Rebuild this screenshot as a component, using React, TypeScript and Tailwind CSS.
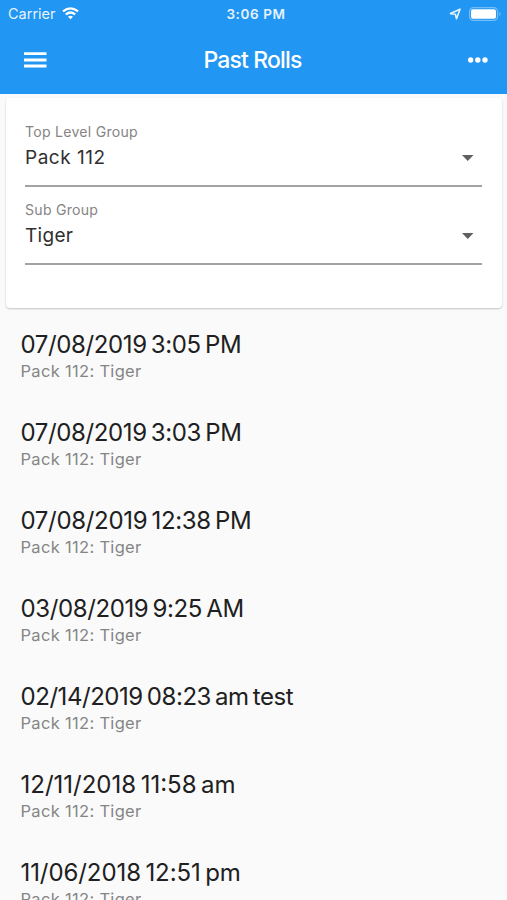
const rolls = [
  { date: "07/08/2019 3:05 PM", tracking: "tracking-[-0.38px]" },
  { date: "07/08/2019 3:03 PM", tracking: "tracking-[-0.38px]" },
  { date: "07/08/2019 12:38 PM", tracking: "tracking-[-0.32px]" },
  { date: "03/08/2019 9:25 AM", tracking: "tracking-[-0.38px]" },
  { date: "02/14/2019 08:23 am test", tracking: "tracking-[-0.45px]" },
  { date: "12/11/2018 11:58 am", tracking: "tracking-[0px]" },
  { date: "11/06/2018 12:51 pm", tracking: "tracking-[-0.08px]" },
];

function Field({ label, value, tracking }: { label: string; value: string; tracking: string }) {
  return (
    <div className="h-[78px] pr-[20px] pl-[19px]">
      <div className="flex h-[66px] flex-col border-b-2 border-[#a3a3a3]">
        <div className="h-[22px] text-[14.1px] leading-[22px] tracking-[0.25px] text-[#858585]">{label}</div>
        <div className="mt-[2px] flex h-[27px] items-center justify-between pr-2">
          <span className={`-mt-[2px] text-[19px] leading-[27px] text-[#303030] ${tracking}`}>{value}</span>
          <svg width="13" height="7" viewBox="0 0 13 7" fill="#606060"><path d="M1 0h11.500L6.750 6z" /></svg>
        </div>
      </div>
    </div>
  );
}

export default function App() {
  return (
    <div className="h-[900px] w-[507px] overflow-hidden bg-[#fafafa] font-['Inter',sans-serif]">
      <header className="h-[94px] bg-[#2196f3] text-white">
        <div className="grid h-[27px] grid-cols-3 items-center pr-[6px] pl-[8px]">
          <div className="flex items-center gap-[7px] text-[14.5px] text-[#e6f3fe]">
            Carrier
            <svg width="17" height="13" viewBox="0 0 17 13" fill="none" stroke="white" strokeWidth="2.2" className="-ml-px">
              <path d="M1 4.400q7.500-6 15 0M3.800 7.500q4.700-4 9.400 0" />
              <path d="M6 9.700q2.500-2 5 0L8.500 12.300z" fill="white" stroke="none" />
            </svg>
          </div>
          <div className="pt-px pl-[3px] text-center text-[13.5px] font-semibold tracking-[0.6px] text-[#e6f3fe]">3:06 PM</div>
          <div className="flex items-center justify-end gap-2">
            <svg width="12" height="12" viewBox="0 0 12 12" fill="none" stroke="#e6f3fe" strokeWidth="1.6" strokeLinejoin="round"><path d="M1.500 5.600L11 1.200 7.500 10.800 6.400 6.200z" /></svg>
            <svg width="32" height="14" viewBox="0 0 32 14"><rect x=".6" y=".6" width="28" height="12.800" rx="3.800" fill="none" stroke="#75bdf8" strokeWidth="1.2" /><rect x="2" y="2.200" width="25" height="9.600" rx="2" fill="white" /><path d="M30.300 4.800q2.500 2.200 0 4.400z" fill="#75bdf8" /></svg>
          </div>
        </div>
        <div className="grid h-[65px] grid-cols-[1fr_auto_1fr] items-center px-[19px]">
          <svg width="32" height="20" viewBox="0 0 32 20" fill="white"><path d="M5 2.200h22.500v2.900H5zM5 8.500h22.500v2.900H5zM5 14.600h22.500v2.900H5z" /></svg>
          <h1 className="-ml-[2px] pt-px text-[23px] font-medium tracking-[-0.85px]">Past Rolls</h1>
          <svg className="justify-self-end" width="20" height="6" viewBox="0 0 20 6" fill="white"><circle cx="2.600" cy="3" r="2.700" /><circle cx="9.800" cy="3" r="2.700" /><circle cx="17" cy="3" r="2.700" /></svg>
        </div>
      </header>
      <section className="mr-[5px] ml-[6px] mt-[4px] h-[210px] rounded-[4px] bg-white pt-[23px] shadow-[0_1px_2px_rgba(0,0,0,0.22)]">
        <Field label="Top Level Group" value="Pack 112" tracking="tracking-[0.5px]" />
        <Field label="Sub Group" value="Tiger" tracking="tracking-[0.3px]" />
      </section>
      <main className="pt-[21px]">
        {rolls.map((roll) => (
          <div key={roll.date} className="h-[88px] pl-[20.5px]">
            <div className={`h-[31px] text-[24px] leading-8 text-[#202020] [word-spacing:-2.2px] ${roll.tracking}`}>{roll.date}</div>
            <div className="h-[22px] text-[16.5px] leading-[22px] tracking-[0.31px] text-[#858585]">Pack 112: Tiger</div>
          </div>
        ))}
      </main>
    </div>
  );
}
